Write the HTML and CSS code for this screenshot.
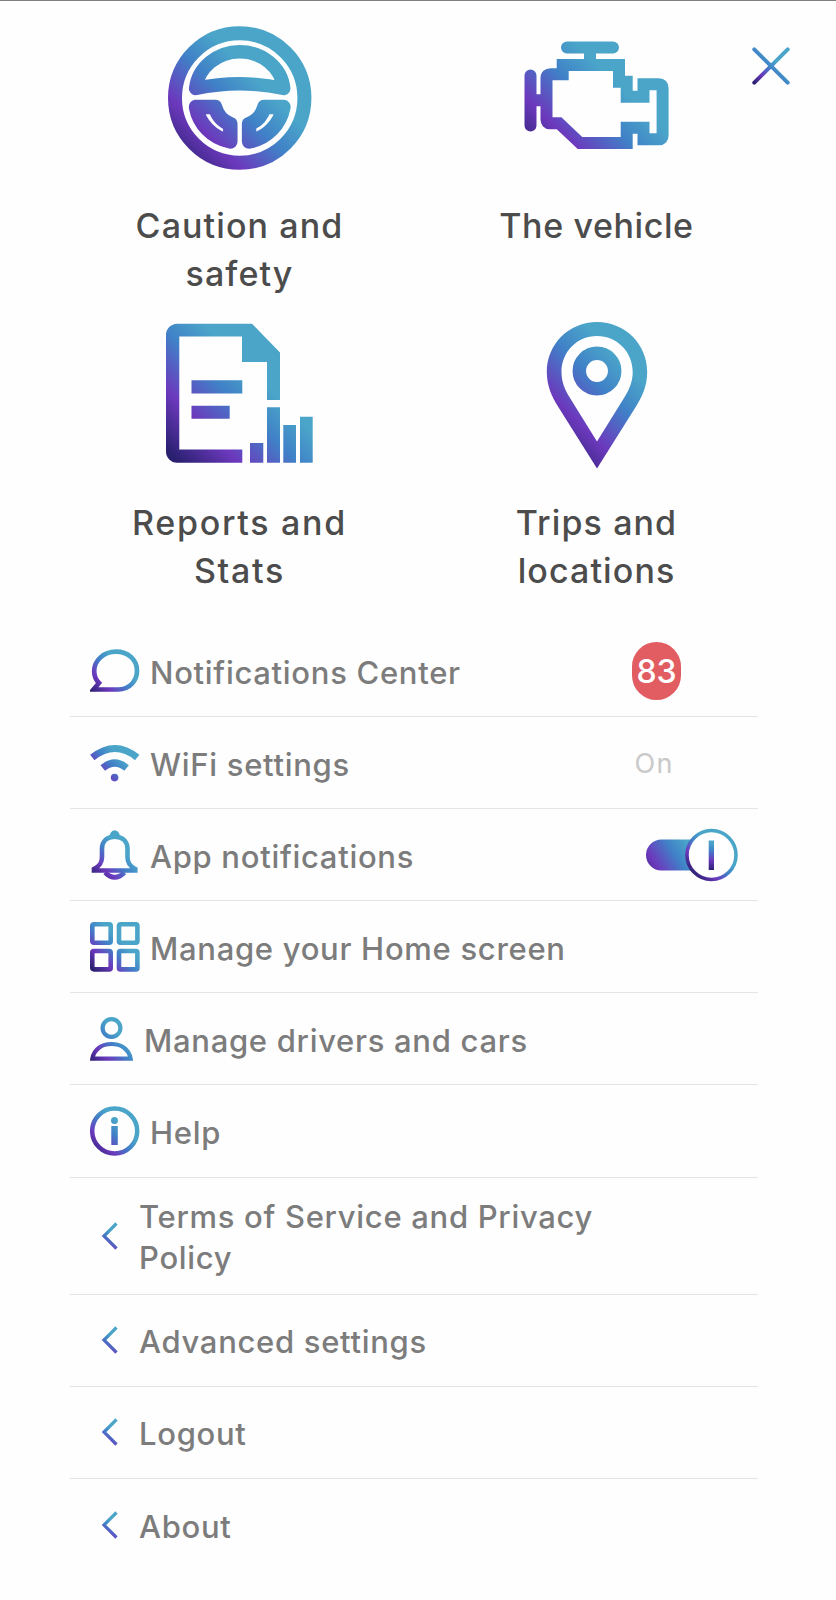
FILE: index.html
```html
<!DOCTYPE html>
<html lang="en">
<head>
    <meta charset="UTF-8">
    <meta name="viewport" content="width=device-width, initial-scale=1.0">
    <title>Menu</title>
    <link rel="stylesheet" href="styles.css">
</head>
<body>
    <!-- shared gradients, one per icon size -->
    <svg class="defs" width="0" height="0">
        <defs>
            <linearGradient id="brand">
                <stop offset="0.05" stop-color="#2a2070"/>
                <stop offset="0.26" stop-color="#6c39bd"/>
                <stop offset="0.46" stop-color="#4081c7"/>
                <stop offset="0.62" stop-color="#4aa5c9"/>
            </linearGradient>
            <linearGradient id="big" href="#brand" gradientUnits="userSpaceOnUse" x1="0" y1="144" x2="144" y2="0"/>
            <linearGradient id="small" href="#brand" gradientUnits="userSpaceOnUse" x1="0" y1="50" x2="50" y2="0"/>
            <linearGradient id="cross" href="#brand" gradientUnits="userSpaceOnUse" x1="0" y1="38" x2="38" y2="0"/>
            <linearGradient id="arrow" href="#brand" gradientUnits="userSpaceOnUse" x1="-4" y1="30" x2="20" y2="-4"/>
            <linearGradient id="track" href="#brand" gradientUnits="userSpaceOnUse" x1="-12" y1="54" x2="78" y2="-4"/>
            <linearGradient id="knob" href="#brand" gradientUnits="userSpaceOnUse" x1="44" y1="48" x2="86" y2="4"/>
            <linearGradient id="bar" href="#brand" gradientUnits="userSpaceOnUse" x1="60" y1="44" x2="66" y2="-4"/>
        </defs>
    </svg>

    <div class="menu">
        <button class="close" aria-label="Close">
            <svg width="38" height="38" viewBox="0 0 38 38" fill="none" stroke="url(#cross)" stroke-width="4" stroke-linecap="round">
                <path d="M2.3 2.3L35.7 35.7M35.7 2.3L2.3 35.7"/>
            </svg>
        </button>

        <div class="features">
            <div class="feature">
                <svg width="144" height="148" viewBox="0 -2 144 148" fill="none" stroke="url(#big)" stroke-width="13.5" stroke-linejoin="round">
                    <circle cx="71.7" cy="72" r="64.7" stroke-width="14"/>
                    <path d="M27.7 62.5C30 41 50 25.7 71.7 25.7S113.5 41 115.7 62.5Q71.7 53 27.7 62.5Z"/>
                    <path stroke-width="14.5" d="M28 81H47C49.500 90 55 95.500 62.300 98V115.500C44 112 31 98 28 81Z"/>
                    <path stroke-width="14.5" d="M115.400 81H96.400C93.900 90 88.400 95.500 81.100 98V115.500C99.400 112 112.400 98 115.400 81Z"/>
                </svg>
                <h2>Caution and safety</h2>
            </div>

            <div class="feature">
                <svg width="146" height="148" viewBox="0 -2 146 148" fill="none" stroke="url(#big)" stroke-width="12">
                    <path d="M43 21.5H89M6.5 49.5V99.5" stroke-linecap="round"/>
                    <path d="M66 24V38M10 74.2H20"/>
                    <path d="M56 117L35 97.2H26Q22.5 97.2 22.5 93.5V52Q22.5 48.3 26.5 48.3H38.7V39H95V55.7H102.7V70.7H119.5V58.3H135Q138.6 58.3 138.6 62V109.5Q138.6 113.3 135 113.3H119.5V101.8H102.7V117Z"/>
                </svg>
                <h2 class="tight">The vehicle</h2>
            </div>

            <div class="feature">
                <svg width="148" height="148" viewBox="0 1 148 148" fill="url(#big)">
                    <path d="M11 3.7H86L114 32.5V80H101V42H76V16.5H13.3V129.5H76.3V142.7H11C5 142.7 0 137.7 0 131.7V14.7C0 8.7 5 3.7 11 3.7Z"/>
                    <path d="M25.5 60.3H76.3V73.6H25.5ZM25.5 85.7H63.7V98.7H25.5Z"/>
                    <path d="M84 123H97.3V142.7H84ZM101 87.3H114V142.7H101ZM117.3 105H130V142.7H117.3ZM134 96.7H146.7V142.7H134Z"/>
                </svg>
                <h2 class="wide">Reports and Stats</h2>
            </div>

            <div class="feature">
                <svg width="102" height="148" viewBox="0 1 102 148">
                    <path fill="url(#big)" fill-rule="evenodd" d="M51 2C79 2 101.2 24 101.2 52C101.2 66 96 77 90 86.5L51 148.5L12 86.5C6 77 .8 66 .8 52C.8 24 23 2 51 2ZM51 16C31 16 15.5 32 15.5 52C15.5 62 19 70 24 78L51 121.5L78 78C83 70 86.7 62 86.7 52C86.7 32 71 16 51 16Z"/>
                    <circle cx="51" cy="51" r="17.7" fill="none" stroke="url(#big)" stroke-width="13.5"/>
                </svg>
                <h2>Trips and locations</h2>
            </div>
        </div>

        <ul class="list">
            <li class="row">
                <svg width="50" height="50" viewBox="0 0 50 50" fill="none" stroke="url(#small)" stroke-width="4.7">
                    <path d="M3.5 43.5H28C40 43.5 47 34.5 47 24.5C47 13.5 38 5.7 26 5.7C13 5.7 4.2 15 4.2 25C4.2 30 6 34 9 37Z"/>
                </svg>
                <span class="label">Notifications Center</span>
                <span class="badge">83</span>
            </li>
            <li class="row">
                <svg width="50" height="50" viewBox="0 0 50 50" fill="none" stroke="url(#small)" stroke-width="7">
                    <path d="M2.3 19.5Q25 1.5 47.2 19.5M12.8 30Q24.8 20 36.6 30"/>
                    <circle cx="24.6" cy="39.6" r="3.8" fill="url(#small)" stroke="none"/>
                </svg>
                <span class="label">WiFi settings</span>
                <span class="state">On</span>
            </li>
            <li class="row">
                <svg width="50" height="50" viewBox="0 0 50 50" fill="none" stroke="url(#small)" stroke-width="4.6">
                    <path d="M4 40.5V39C10 36 12 33 12 27V19C12 11 17 6.7 24.700 6.7S37.500 11 37.500 19V27C37.500 33 39.500 36 45.300 39V40.500Z"/>
                    <path d="M15 42.5Q24.7 52 34.5 42.5"/>
                    <path fill="url(#small)" stroke="none" d="M17.500 7Q20.500 5 20.500 3Q22 .3 24.700 .3T29 3Q29 5 32 7Z"/>
                </svg>
                <span class="label">App notifications</span>
                <svg class="toggle" width="93" height="54" viewBox="0 0 93 54">
                    <rect x="0" y="11.5" width="70" height="31" rx="15.5" fill="url(#track)"/>
                    <circle cx="65.5" cy="27" r="24.5" fill="#fff" stroke="url(#knob)" stroke-width="3.6"/>
                    <rect x="62.7" y="12.5" width="5.300" height="29.5" fill="url(#bar)"/>
                </svg>
            </li>
            <li class="row">
                <svg width="50" height="50" viewBox="0 0 50 50" fill="none" stroke="url(#small)" stroke-width="4.6">
                    <rect x="2.3" y="2.3" width="18.4" height="18.4" rx="1.5"/>
                    <rect x="29" y="2.3" width="18.4" height="18.4" rx="1.5"/>
                    <rect x="2.3" y="29" width="18.4" height="18.4" rx="1.5"/>
                    <rect x="29" y="29" width="18.4" height="18.4" rx="1.5"/>
                </svg>
                <span class="label">Manage your Home screen</span>
            </li>
            <li class="row">
                <svg width="44" height="44" viewBox="0 0 44 44" fill="none" stroke="url(#small)" stroke-width="4.2">
                    <circle cx="21.5" cy="11" r="8.9"/>
                    <path d="M2.4 41.6C4 32 12 27 21.5 27S39 32 40.6 41.6Z"/>
                </svg>
                <span class="label">Manage drivers and cars</span>
            </li>
            <li class="row">
                <svg width="50" height="50" viewBox="0 0 50 50">
                    <circle cx="24.7" cy="25" r="22.5" fill="none" stroke="url(#small)" stroke-width="4.5"/>
                    <circle cx="24.5" cy="14.5" r="3.5" fill="url(#small)"/>
                    <rect x="21.3" y="20" width="6.5" height="19" fill="url(#small)"/>
                </svg>
                <span class="label">Help</span>
            </li>
            <li class="row link tall">
                <svg width="17" height="28" viewBox="0 0 17 28" fill="none" stroke="url(#arrow)" stroke-width="3.2">
                    <path d="M15.500 1.500L3 14L15.500 26.500"/>
                </svg>
                <span class="label">Terms of Service and Privacy Policy</span>
            </li>
            <li class="row link">
                <svg width="17" height="28" viewBox="0 0 17 28" fill="none" stroke="url(#arrow)" stroke-width="3.2">
                    <path d="M15.500 1.500L3 14L15.500 26.500"/>
                </svg>
                <span class="label">Advanced settings</span>
            </li>
            <li class="row link">
                <svg width="17" height="28" viewBox="0 0 17 28" fill="none" stroke="url(#arrow)" stroke-width="3.2">
                    <path d="M15.500 1.500L3 14L15.500 26.500"/>
                </svg>
                <span class="label">Logout</span>
            </li>
            <li class="row link">
                <svg width="17" height="28" viewBox="0 0 17 28" fill="none" stroke="url(#arrow)" stroke-width="3.2">
                    <path d="M15.500 1.500L3 14L15.500 26.500"/>
                </svg>
                <span class="label">About</span>
            </li>
        </ul>
    </div>
</body>
</html>
```

FILE: styles.css
```css
*,
*::before,
*::after{
    padding: 0;
    margin: 0;
    box-sizing: border-box;
}
body{
    background-color: #fefefe;
    font-family: "Inter", "Noto Sans", sans-serif;
}
.defs{
    position: absolute;
}
.menu{
    position: relative;
    min-height: 1600px;
    padding: 23px 60px 0 61px;
    border-top: 1px solid #808080;
}
.close{
    position: absolute;
    top: 46px;
    right: 46px;
    width: 38px;
    height: 38px;
    border: none;
    background: none;
}
.close svg{
    display: block;
}
.features{
    display: grid;
    grid-template-columns: 357px 357px;
    row-gap: 24px;
}
.feature{
    display: flex;
    flex-direction: column;
    align-items: center;
    height: 273px;
}
.feature h2{
    width: 240px;
    margin-top: 30px;
    color: #4c4c4c;
    font-size: 34px;
    font-weight: 500;
    line-height: 47.5px;
    letter-spacing: 1.1px;
    text-align: center;
}
.feature .tight{
    letter-spacing: 0.6px;
}
.feature .wide{
    letter-spacing: 1.7px;
}
.list{
    margin: 31px 0 0 9px;
    width: 688px;
    list-style: none;
}
.row{
    display: flex;
    align-items: center;
    height: 92.1px;
    padding: 0 19px 0 20px;
    border-bottom: 1px solid #e4e4e4;
}
.row:last-child{
    border-bottom: none;
}
.row svg{
    flex-shrink: 0;
}
.tall{
    height: 117px;
}
.link{
    padding-left: 31px;
}
.label{
    max-width: 490px;
    margin-left: 10px;
    padding-top: 3px;
    color: #7c7c7c;
    font-size: 31px;
    font-weight: 500;
    line-height: 41px;
    letter-spacing: 0.7px;
}
.link .label{
    margin-left: 21px;
}
.badge{
    width: 49px;
    height: 58px;
    margin-left: auto;
    margin-right: 58px;
    border-radius: 24.5px;
    background-color: #e15d61;
    color: #ffffff;
    font-size: 32px;
    font-weight: 500;
    line-height: 60px;
    text-align: center;
}
.state{
    margin-left: auto;
    margin-right: 65px;
    padding-top: 2px;
    color: #c9c9c9;
    font-size: 27px;
    letter-spacing: 1.5px;
}
.toggle{
    margin-left: auto;
}
```
